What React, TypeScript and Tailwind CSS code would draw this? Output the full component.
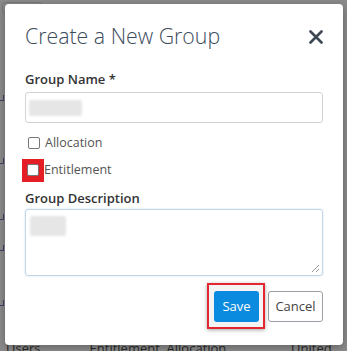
import React from 'react';

const font = { fontFamily: '"Open Sans", "Noto Sans", sans-serif' };

function Blur({ w, h }: { w: string; h: string }) {
  return <div className={`${w} ${h} rounded-[2px] bg-[#e6e6e6] blur-[1px]`} />;
}

export default function App() {
  return (
    <div className="relative w-[347px] h-[351px] overflow-hidden bg-[#8b8b8b]" style={font}>
      {/* page behind the overlay */}
      <div className="absolute left-0 top-0 w-full h-full text-[13px] text-[#2a2a2a]">
        <div className="absolute left-[2px] top-[2px] w-[40px] h-[12px] border border-[#7a7a7a] rounded-[3px]" />
        {[95, 158, 214, 245, 300].map((y) => (
          <div key={y} className="absolute left-0 w-[4px] h-[6px] border-r border-b border-[#4a3a6a]" style={{ top: y }} />
        ))}
        <div className="absolute left-[6px] top-[339px] flex w-full leading-[18px]">
          <span className="w-[85px]">Users</span>
          <span className="w-[205px]">Entitlement, Allocation</span>
          <span>United Sta</span>
        </div>
      </div>

      <div className="relative ml-[5px] mt-[4px] w-[338px] h-[341px] bg-white rounded-[4px] shadow-[0_2px_8px_rgba(0,0,0,0.3)] px-[20px] pt-[17px]">
        {/* Header */}
        <div className="flex items-center justify-between">
          <h2 className="text-[21.3px] font-light text-[#3b4b5b] leading-[30px]">Create a New Group</h2>
          <svg width="14" height="14" viewBox="0 0 14 14" className="mt-[2px]">
            <path d="M1.5 1.5 L12.5 12.5 M12.5 1.5 L1.5 12.5" stroke="#3d4852" strokeWidth="2.6" strokeLinecap="round" />
          </svg>
        </div>

        {/* Group name */}
        <label className="block mt-[19px] text-[13px] font-semibold text-[#333] leading-[18px]">Group Name *</label>
        <div className="mt-[4px] h-[31px] border border-[#cfd4d8] rounded-[3px] px-[3px] pt-[7px]">
          <Blur w="w-[53px]" h="h-[16px]" />
        </div>

        {/* Checkboxes */}
        <div className="mt-[11px] flex items-center gap-[5px] pl-[3px] text-[12.5px] text-[#555] leading-[18px]">
          <span className="w-[12px] h-[12px] border border-[#767676] rounded-[2px] bg-white" />
          <span>Allocation</span>
        </div>
        <div className="mt-[9px] flex items-center pl-[3px] text-[12.5px] text-[#555] leading-[18px]">
          <span className="-ml-[6px] -my-[3px] w-[22px] h-[23px] bg-[#e51d25] flex items-center justify-center">
            <span className="w-[12px] h-[12px] border border-[#767676] rounded-[2px] bg-white" />
          </span>
          <span>Entitlement</span>
        </div>

        {/* Description */}
        <label className="block mt-[10px] text-[13px] font-semibold text-[#333] leading-[18px]">Group Description</label>
        <div className="relative mt-[2px] h-[67px] border border-[#c3d6e6] rounded-[3px] px-[4px] pt-[6px] shadow-[0_0_2px_rgba(120,170,220,0.4)]">
          <Blur w="w-[36px]" h="h-[20px]" />
          <svg width="9" height="9" viewBox="0 0 9 9" className="absolute right-[2px] bottom-[2px]">
            <path d="M8 1 L1 8 M8 5 L5 8" stroke="#999" strokeWidth="1" />
          </svg>
        </div>

        {/* Footer */}
        <div className="mt-[15px] flex justify-end gap-[9px]">
          <div className="relative">
            <span className="absolute -left-[7px] -right-[6px] -top-[8px] -bottom-[7px] border-2 border-[#e3262f] shadow-[0_1px_4px_rgba(0,0,0,0.35)] bg-[#f4f4f4]" />
            <button className="relative w-[45px] h-[31px] rounded-[3px] bg-[#0b8be0] text-white text-[13px]">Save</button>
          </div>
          <button className="w-[55px] h-[31px] rounded-[3px] border border-[#9aa0a6] bg-white text-[#444] text-[13px]">Cancel</button>
        </div>
      </div>
    </div>
  );
}
